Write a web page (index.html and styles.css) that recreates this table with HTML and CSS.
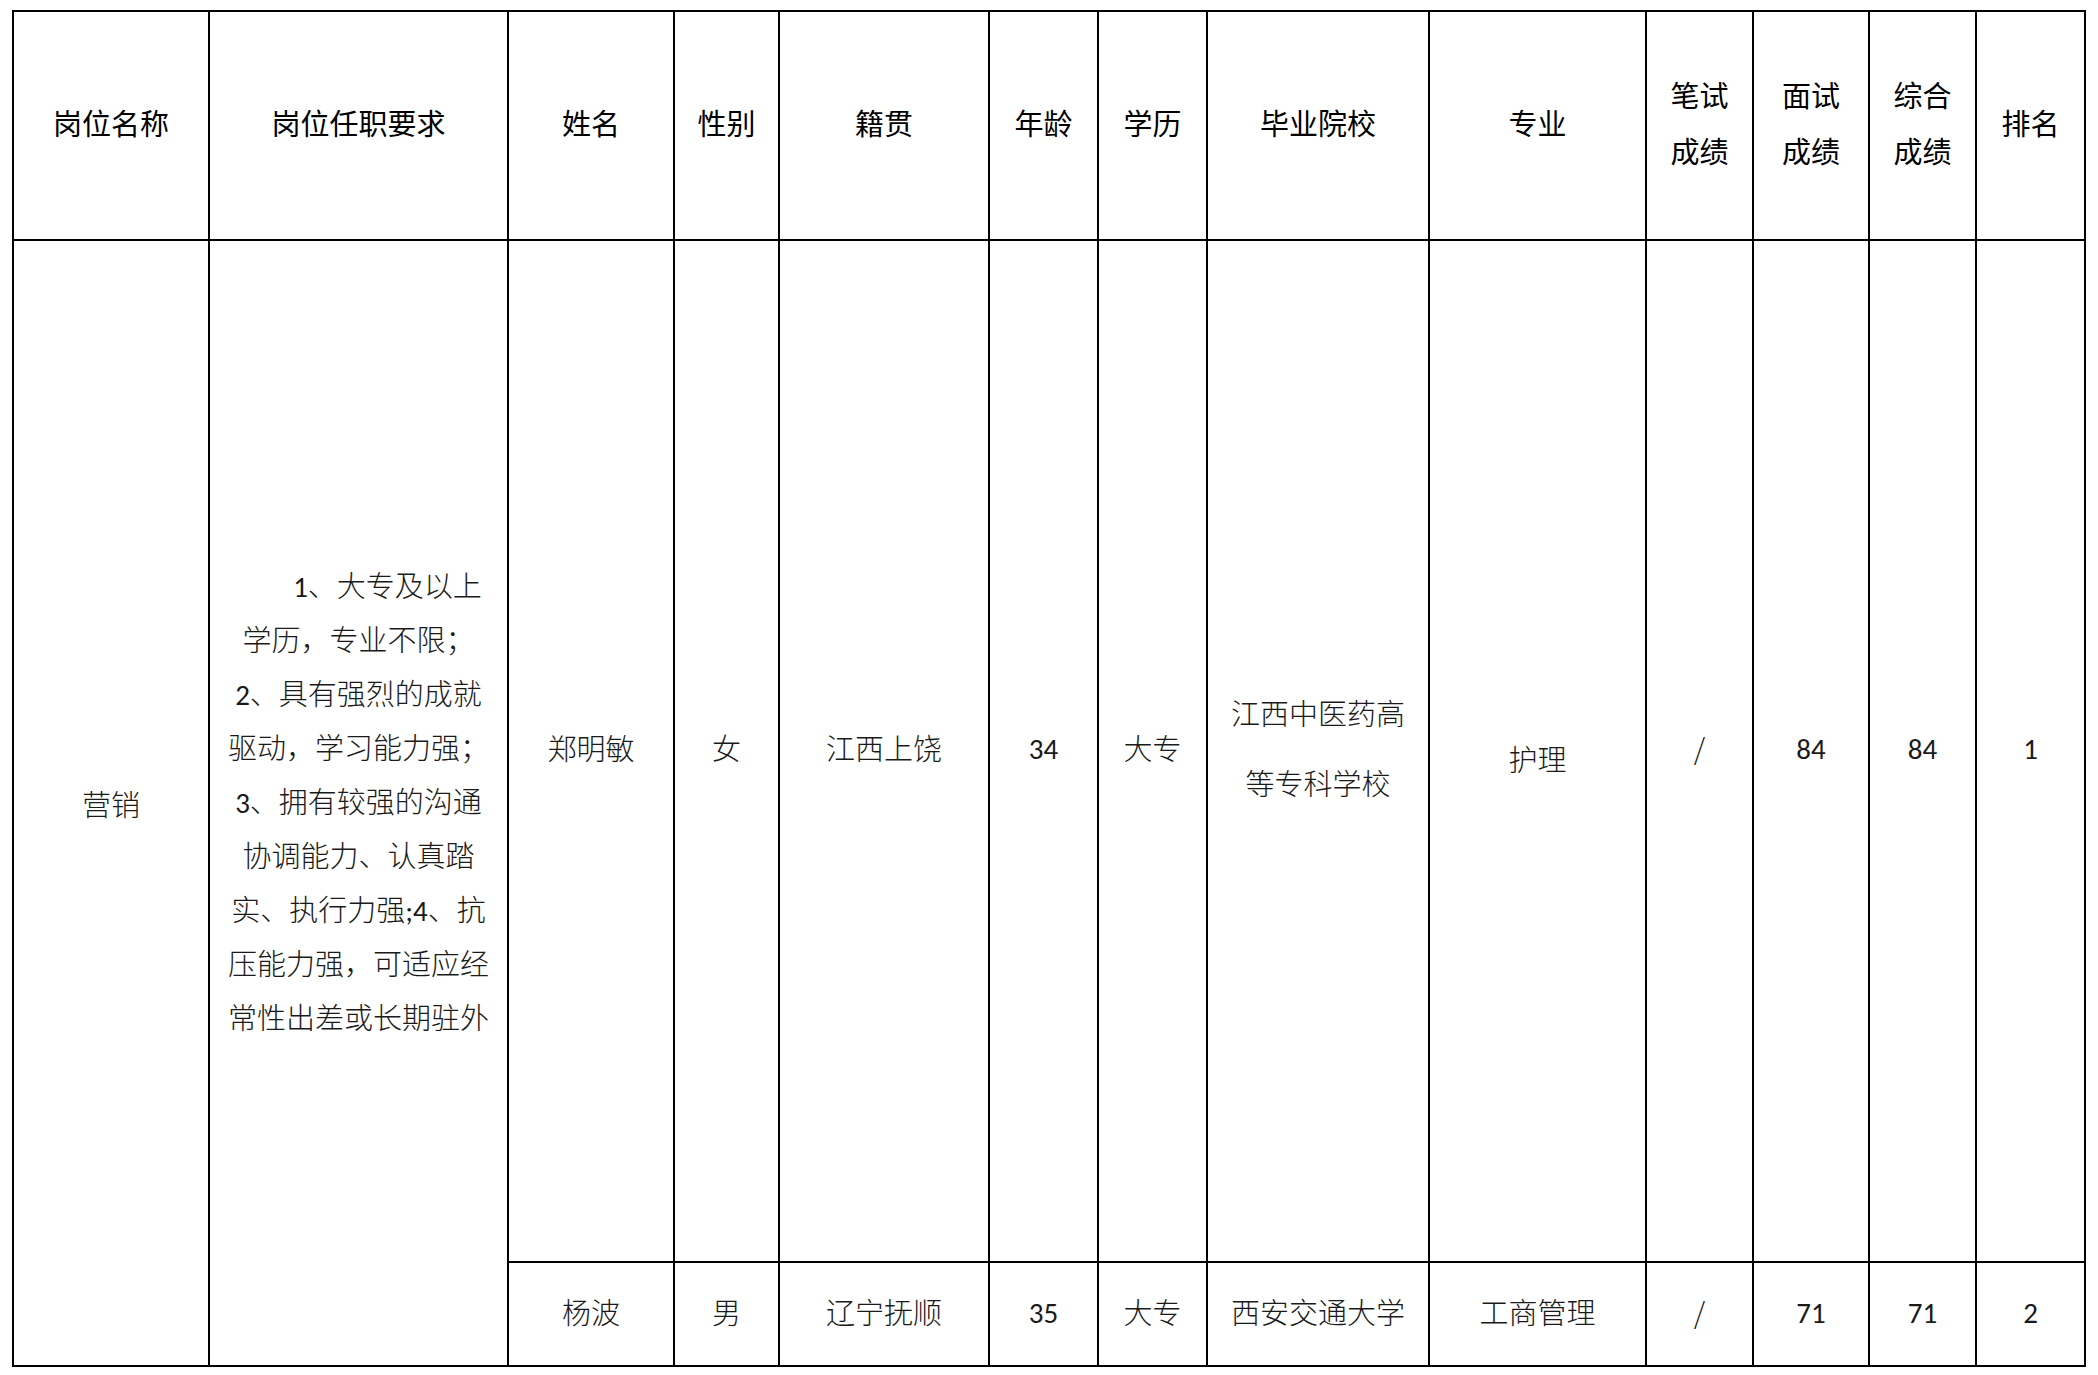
FILE: index.html
```html
<!DOCTYPE html>
<html lang="zh-CN">
<head>
<meta charset="utf-8">
<title>招聘成绩表</title>
<link rel="stylesheet" href="styles.css">
</head>
<body>
<table class="grid">
  <colgroup>
    <col class="c-post">
    <col class="c-req">
    <col class="c-name">
    <col class="c-sex">
    <col class="c-origin">
    <col class="c-age">
    <col class="c-edu">
    <col class="c-school">
    <col class="c-major">
    <col class="c-score">
    <col class="c-score2">
    <col class="c-score3">
    <col class="c-rank">
  </colgroup>
  <thead>
    <tr class="head">
      <th>岗位名称</th>
      <th>岗位任职要求</th>
      <th>姓名</th>
      <th>性别</th>
      <th>籍贯</th>
      <th>年龄</th>
      <th>学历</th>
      <th>毕业院校</th>
      <th>专业</th>
      <th class="two">笔试<br>成绩</th>
      <th class="two">面试<br>成绩</th>
      <th class="two">综合<br>成绩</th>
      <th>排名</th>
    </tr>
  </thead>
  <tbody>
    <tr class="row-a">
      <td rowspan="2" class="span">营销</td>
      <td rowspan="2" class="span"><p class="req-text">1、大专及以上学历，专业不限；2、具有强烈的成就驱动，学习能力强；3、拥有较强的沟通协调能力、认真踏实、执行力强;4、抗压能力强，可适应经常性出差或长期驻外</p></td>
      <td>郑明敏</td>
      <td>女</td>
      <td>江西上饶</td>
      <td class="num">34</td>
      <td>大专</td>
      <td class="school">江西中医药高<br>等专科学校</td>
      <td class="major">护理</td>
      <td class="slash">/</td>
      <td class="num">84</td>
      <td class="num">84</td>
      <td class="num">1</td>
    </tr>
    <tr class="row-b">
      <td>杨波</td>
      <td>男</td>
      <td>辽宁抚顺</td>
      <td class="num">35</td>
      <td>大专</td>
      <td>西安交通大学</td>
      <td>工商管理</td>
      <td class="slash">/</td>
      <td class="num">71</td>
      <td class="num">71</td>
      <td class="num">2</td>
    </tr>
  </tbody>
</table>
</body>
</html>
```

FILE: styles.css
```css
html, body {
  margin: 0;
  padding: 0;
  background: #ffffff;
}

body {
  padding: 10px 0 0 12px;
}

.grid {
  border-collapse: collapse;
  table-layout: fixed;
  width: 2074px;
  color: #000;
  font-family: "Noto Sans CJK SC", sans-serif;
  font-size: 29px;
}

.c-post   { width: 196px; }
.c-req    { width: 299px; }
.c-name   { width: 166px; }
.c-sex    { width: 105px; }
.c-origin { width: 210px; }
.c-age    { width: 109px; }
.c-edu    { width: 109px; }
.c-school { width: 222px; }
.c-major  { width: 217px; }
.c-score  { width: 107px; }
.c-score2 { width: 116px; }
.c-score3 { width: 107px; }
.c-rank   { width: 109px; }

.grid th,
.grid td {
  border: 2px solid #000;
  padding: 0;
  text-align: center;
  vertical-align: middle;
}

.head th {
  height: 219px;
  padding-bottom: 8px;
  font-weight: 400;
  line-height: 40px;
}

.head th.two {
  line-height: 56px;
}

.grid td {
  font-weight: 300;
  color: #1a1a1a;
  line-height: 40px;
}

.row-a td {
  height: 1012px;
  padding-bottom: 8px;
}

.row-a td.span {
  height: auto;
  padding-bottom: 0;
}

.row-b td {
  height: 96px;
  padding-bottom: 6px;
}

.req-text {
  margin: 0 auto;
  width: 9.2em;
  text-indent: 2em;
  text-align: center;
  line-height: 54px;
  font-family: "Carlito", "Lato", "Noto Sans CJK SC", sans-serif;
}

.grid td.num {
  font-family: "Carlito", "Lato", sans-serif;
  padding-top: 3px;
}

.row-a td.num {
  height: 1009px;
}

.row-b td.num {
  height: 93px;
}

.row-a .school {
  line-height: 70px;
}

.row-a .major {
  padding-top: 14px;
  padding-bottom: 0;
  height: 1006px;
}
```
